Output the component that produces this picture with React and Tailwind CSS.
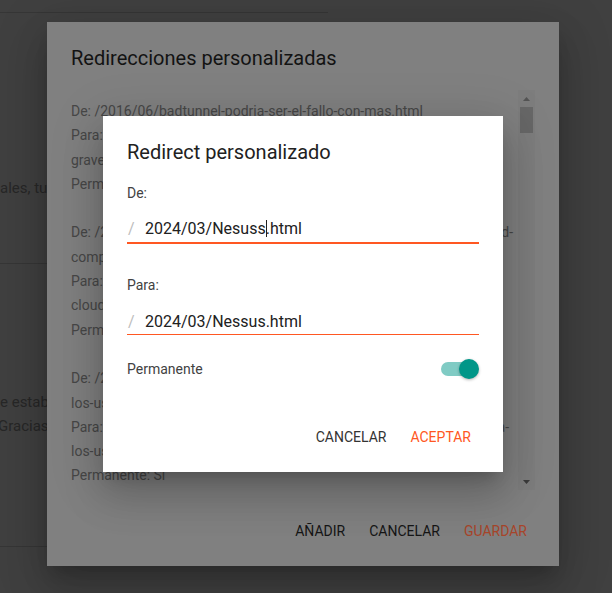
import React from "react";

function Line({ children }) {
  return <div className="whitespace-nowrap">{children}</div>;
}

function SplitLine({ left, right, rightClass = "" }) {
  return (
    <div className="flex justify-between whitespace-nowrap">
      <span>{left}</span>
      <span className={rightClass}>{right}</span>
    </div>
  );
}

function Scrollbar() {
  return (
    <div className="flex w-[17px] flex-col bg-[#7d7d7d]">
      <div className="flex h-[17px] items-center justify-center">
        <svg width="7" height="4" viewBox="0 0 7 4">
          <path d="M0 4 L3.5 0 L7 4 Z" fill="#545454" />
        </svg>
      </div>
      <div className="mx-[2px] h-[26px] bg-[#676767]" />
      <div className="flex-1" />
      <div className="flex h-[17px] items-center justify-center">
        <svg width="7" height="4" viewBox="0 0 7 4">
          <path d="M0 0 L7 0 L3.5 4 Z" fill="#3a3a3a" />
        </svg>
      </div>
    </div>
  );
}

export default function App() {
  return (
    <div className="relative h-[593px] w-[612px] overflow-hidden bg-[#404040] font-[Roboto,sans-serif]">
      {/* page behind the dialogs */}
      <div className="text-[15px] leading-6 text-[#272727]">
        <div className="h-[13px] w-[328px] border-b border-[#363636]" />
        <div className="mt-[163px] whitespace-nowrap">ales, tutoriales y noticias de seguridad.</div>
        <div className="mt-[63px] w-[120px] border-b border-[#363636]" />
        <div className="mt-[126px] whitespace-nowrap">e estaba buscando, muy útil.</div>
        <div className="-ml-[2px] whitespace-nowrap">Gracias por compartirlo.</div>
        <div className="mt-[108px] w-[120px] border-b border-[#363636]" />
      </div>

      {/* outer dialog */}
      <div className="absolute left-[47px] top-[22px] flex h-[544px] w-[512px] flex-col bg-[#808080] shadow-[0_11px_15px_-7px_rgba(0,0,0,0.2),0_24px_38px_3px_rgba(0,0,0,0.14),0_9px_46px_8px_rgba(0,0,0,0.12)]">
        <h2 className="px-6 pt-6 text-[20px] leading-6 font-normal text-[#131313]">
          Redirecciones personalizadas
        </h2>
        <div className="mx-6 mt-5 flex h-[400px]">
          <div className="flex-1 overflow-hidden pt-[9px] pr-[5px] text-[14px] leading-[24.3px] text-[#474747]">
            <Line>De: /2016/06/badtunnel-podria-ser-el-fallo-con-mas.html</Line>
            <Line>Para: /2016/06/badtunnel-el-fallo-de-seguridad-mas-</Line>
            <Line>grave-de-windows.html</Line>
            <Line>Permanente: Sí</Line>
            <div className="h-[24.3px]" />
            <SplitLine left="De: /2017/02/cloudbleed-un-fallo-en-cloudflare-" right="d-" />
            <Line>compromete-millones-de-webs.html</Line>
            <Line>Para: /2017/02/cloudbleed-fallo-de-seguridad-en-</Line>
            <Line>cloudflare-compromete-millones-de-webs.html</Line>
            <Line>Permanente: Sí</Line>
            <div className="h-[24.3px]" />
            <Line>De: /2017/05/wannacry-el-ransomware-que-afecta-a-</Line>
            <Line>los-usuarios-de-windows.html</Line>
            <SplitLine left="Para: /2017/05/wannacry-ransomware-que-afecta-" right="a-" rightClass="mr-[4px]" />
            <Line>los-usuarios-de-windows-xp.html</Line>
            <Line>Permanente: Sí</Line>
            <div className="h-[24.3px]" />
            <Line>De: /2018/01/meltdown-y-spectre.html</Line>
          </div>
          <Scrollbar />
        </div>
        <div className="mt-auto flex justify-end gap-2 px-6 pb-[17px]">
          <button className="h-9 px-2 text-[14px] font-normal uppercase text-[#161616]">Añadir</button>
          <button className="h-9 px-2 text-[14px] font-normal uppercase text-[#161616]">Cancelar</button>
          <button className="h-9 px-2 text-[14px] font-normal uppercase text-[#a7452a]">Guardar</button>
        </div>
      </div>

      {/* inner dialog */}
      <div className="absolute left-[103px] top-[116px] flex h-[356px] w-[400px] flex-col bg-white shadow-[0_11px_15px_-7px_rgba(0,0,0,0.2),0_24px_38px_3px_rgba(0,0,0,0.14),0_9px_46px_8px_rgba(0,0,0,0.12)]">
        <h3 className="px-6 pt-6 text-[20px] leading-6 font-normal text-[#212121]">
          Redirect personalizado
        </h3>
        <div className="px-6 pt-[19px]">
          <div className="text-[14px] leading-5 text-[#424242]">De:</div>
          <div className="flex border-b-2 border-[#ff5722] pt-[14px] pb-px text-[16px] leading-6">
            <span className="w-[18px] pl-px text-[#bdbdbd]">/</span>
            <span className="text-[#212121]">
              2024/03/Nesuss
              <span className="-mr-px inline-block h-[17px] w-px bg-[#212121] align-[-3px]" />
              .html
            </span>
          </div>
          <div className="mt-[31px] text-[14px] leading-5 text-[#424242]">Para:</div>
          <div className="flex border-b border-[#ff5722] pt-[15px] text-[16px] leading-6">
            <span className="w-[18px] pl-px text-[#bdbdbd]">/</span>
            <span className="text-[#212121]">2024/03/Nessus.html</span>
          </div>
          <div className="mt-6 flex items-center justify-between">
            <span className="text-[14px] leading-5 text-[#424242]">Permanente</span>
            <div className="relative h-5 w-[38px]">
              <div className="absolute left-0 top-[3px] h-[14px] w-[34px] rounded-full bg-[#80cbc4]" />
              <div className="absolute right-0 top-0 h-5 w-5 rounded-full bg-[#009688] shadow-[0_1px_3px_rgba(0,0,0,0.3)]" />
            </div>
          </div>
        </div>
        <div className="mt-auto flex justify-end gap-2 px-6 pb-[17px]">
          <button className="h-9 px-2 text-[14px] font-normal uppercase text-[#333333]">Cancelar</button>
          <button className="h-9 px-2 text-[14px] font-normal uppercase text-[#ff5722]">Aceptar</button>
        </div>
      </div>
    </div>
  );
}
